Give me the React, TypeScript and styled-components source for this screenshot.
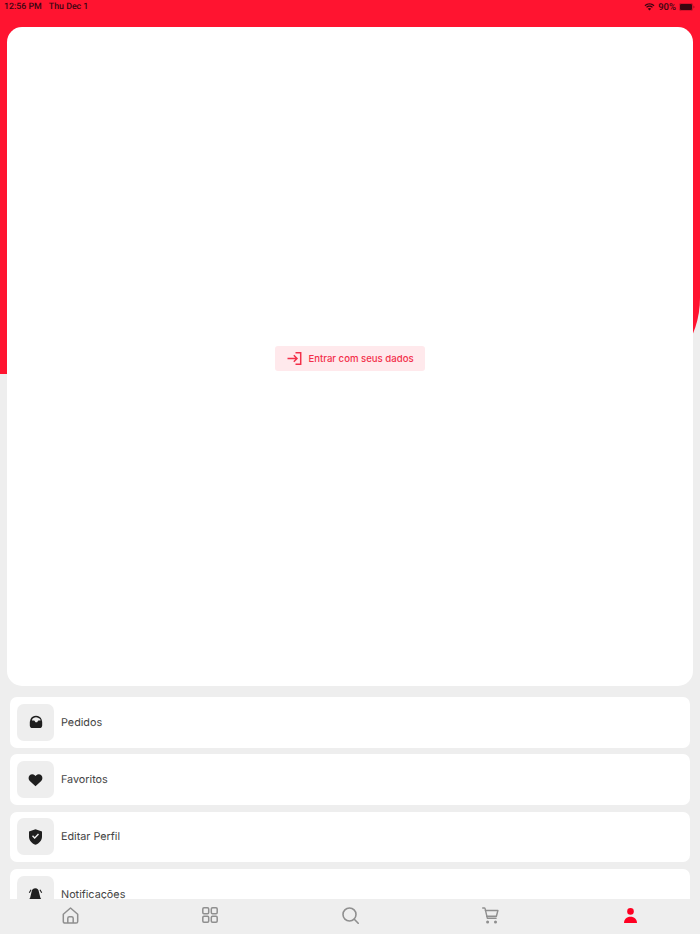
import React from 'react';
import styled, { createGlobalStyle } from 'styled-components';

const GlobalStyle = createGlobalStyle`
  html, body {
    margin: 0;
    padding: 0;
    height: 100%;
    background: #eeeeee;
    font-family: Inter, "Liberation Sans", sans-serif;
    text-rendering: geometricPrecision;
  }
`;

const Page = styled.div`
  position: relative;
  width: 700px;
  height: 934px;
  overflow: hidden;
  background: #eeeeee;
  display: flex;
  flex-direction: column;
`;

const RedBackdrop = styled.div`
  position: absolute;
  top: 0;
  left: 0;
  right: 0;
  height: 374px;
  background: #ff1430;
  border-bottom-right-radius: 60px 76px;
`;

const StatusBar = styled.div`
  position: relative;
  height: 27px;
  flex: none;
  box-sizing: border-box;
  padding: 1.5px 5px 0 4px;
  display: flex;
  justify-content: space-between;
  align-items: flex-start;
  font-family: Roboto, Inter, sans-serif;
  line-height: 11px;
  font-weight: 500;
  color: #3a0610;
`;

const StatusGroup = styled.div<{ $gap: number; $size: number }>`
  display: flex;
  align-items: center;
  gap: ${p => p.$gap}px;
  font-size: ${p => p.$size}px;
`;

const Body = styled.div`
  position: relative;
  flex: 1;
  min-height: 0;
  overflow: hidden;
  padding: 0 7px;
  display: flex;
  flex-direction: column;
`;

const LoginCard = styled.div`
  height: 659px;
  flex: none;
  box-sizing: border-box;
  padding-top: 4px;
  background: #ffffff;
  border-radius: 15px;
  display: flex;
  align-items: center;
  justify-content: center;
`;

const LoginButton = styled.button`
  width: 150px;
  height: 25px;
  padding: 0 0 0 1px;
  border: none;
  border-radius: 3px;
  background: #ffe9ec;
  color: #f3304a;
  display: flex;
  align-items: center;
  justify-content: center;
  gap: 6px;
  font-family: Inter, sans-serif;
  font-size: 9.6px;
  font-weight: 500;
`;

const MenuList = styled.div`
  flex: none;
  margin-top: 11px;
  padding: 0 3px;
  display: flex;
  flex-direction: column;
  gap: 6.67px;
`;

const MenuRow = styled.div`
  height: 50.67px;
  flex: none;
  box-sizing: border-box;
  padding: 0 7px;
  background: #ffffff;
  border-radius: 7px;
  display: flex;
  align-items: center;
  gap: 7px;
`;

const IconTile = styled.div`
  width: 37px;
  height: 37px;
  flex: none;
  border-radius: 7px;
  background: #eeeeee;
  color: #1f1f1f;
  display: flex;
  align-items: center;
  justify-content: center;
`;

const MenuLabel = styled.span`
  font-size: 10.8px;
  color: #444444;
`;

const TabBar = styled.nav`
  position: relative;
  height: 35px;
  flex: none;
  box-sizing: border-box;
  padding-bottom: 3px;
  background: #eeeeee;
  display: grid;
  grid-template-columns: repeat(5, 140px);
`;

const TabItem = styled.div<{ $active?: boolean }>`
  display: flex;
  align-items: center;
  justify-content: center;
  color: ${p => (p.$active ? '#ff0022' : '#8f8f8f')};
`;

const WifiIcon = () => (
  <svg width="11" height="8" viewBox="0 0 11 8" fill="currentColor">
    <path d="M5.5 1.6c1.6 0 3 .6 4.1 1.6l.9-.9C9.2 1 7.4.2 5.5.2S1.8 1 .5 2.3l.9.9c1.1-1 2.5-1.6 4.1-1.6z" />
    <path d="M5.5 3.8c1 0 1.8.4 2.5 1l.9-.9c-.9-.9-2.1-1.4-3.4-1.4s-2.5.5-3.4 1.4l.9.9c.7-.6 1.5-1 2.5-1z" />
    <path d="M5.5 5c-.7 0-1.2.3-1.7.7l1.7 1.9 1.7-1.9C6.7 5.3 6.2 5 5.5 5z" />
  </svg>
);

const BatteryIcon = () => (
  <svg width="16" height="8" viewBox="0 0 16 8">
    <rect x="0.3" y="0.3" width="13.4" height="7.4" rx="1.8" fill="none" stroke="currentColor" strokeOpacity="0.4" strokeWidth="0.6" />
    <rect x="1" y="1" width="12" height="6" rx="1.1" fill="currentColor" />
    <path d="M14.5 2.8c.6.2 1 .7 1 1.2s-.4 1-1 1.2z" fill="currentColor" fillOpacity="0.5" />
  </svg>
);

const LoginIcon = () => (
  <svg width="15" height="13" viewBox="0 0 15 13" fill="none" stroke="currentColor" strokeWidth="1.5">
    <path d="M8.5 .8h5.200v11.400H8.500" />
    <path d="M.5 6.500h9.500M6.800 3.300l3.200 3.200-3.200 3.200" />
  </svg>
);

const TrayIcon = () => (
  <svg width="14" height="14" viewBox="0 0 14 14" fill="currentColor">
    <path fillRule="evenodd" d="M7 .8c2.600 0 4.700 1.300 5.500 3.400l.6 2.300c.1.300.1.600.1.900v3c0 1.500-1.200 2.700-2.700 2.700H3.500C2 13.100.8 11.900.8 10.400v-3c0-.3 0-.6.1-.9l.6-2.300C2.300 2.100 4.400.8 7 .8zM7 2.300c-1.800 0-3.200.9-3.800 2.300l-.2 1h2c.4 0 .7.200.9.600l.2.500c.2.400.5.600.9.600h.6c.4 0 .7-.2.900-.6l.2-.500c.2-.4.500-.6.900-.6h2l-.2-1C10.200 3.200 8.800 2.300 7 2.300z" />
  </svg>
);

const HeartIcon = () => (
  <svg width="15" height="14" viewBox="0 0 15 14" fill="currentColor">
    <path d="M7.500 13.300 1.800 7.900C.3 6.400.2 4 1.500 2.500 2.900 1 5.200.9 6.700 2.200l.8.800.8-.800c1.500-1.300 3.800-1.200 5.200.3 1.300 1.500 1.200 3.900-.3 5.400z" />
  </svg>
);

const ShieldIcon = () => (
  <svg width="15" height="16" viewBox="0 0 15 16" fill="currentColor">
    <path fillRule="evenodd" d="M7.500.3 14 2.400v5c0 4-2.700 6.900-6.500 8.300C3.700 14.300 1 11.400 1 7.400v-5zM11 5.600l-1-1-3.300 3.400L5 6.300l-1 1 2.700 2.700z" />
  </svg>
);

const SirenIcon = () => (
  <svg width="15" height="15" viewBox="0 0 15 15" fill="currentColor">
    <path d="M7.500 1.300c1.900 0 3.100 1.500 3.400 3.400l1.400 5.800c.2.600.5 1 .9 1.500V14H1.300v-2c.4-.5.700-.9.900-1.500l1.400-5.800c.3-1.900 1.500-3.400 3.900-3.400z" />
    <path d="M2.600 2.500l.9.500-1.700 3-1-.5zM12.400 2.500l-.9.500 1.700 3 1-.5z" />
  </svg>
);

const HomeIcon = () => (
  <svg width="17" height="17" viewBox="0 0 17 17" fill="none" stroke="currentColor" strokeWidth="1.500" strokeLinejoin="round">
    <path d="M1.300 7.300 8.500 1l7.200 6.300v7.200c0 .9-.7 1.600-1.600 1.600H2.900c-.9 0-1.600-.7-1.600-1.600z" />
    <path d="M5.800 16v-4.700c0-.9.700-1.600 1.600-1.600h2.200c.9 0 1.600.7 1.600 1.600V16" />
  </svg>
);

const GridIcon = () => (
  <svg width="16" height="16" viewBox="0 0 16 16" fill="none" stroke="currentColor" strokeWidth="1.500">
    <rect x="0.800" y="0.800" width="5.900" height="5.900" rx="1.200" />
    <rect x="9.300" y="0.800" width="5.900" height="5.900" rx="1.200" />
    <rect x="0.800" y="9.300" width="5.900" height="5.900" rx="1.200" />
    <rect x="9.300" y="9.300" width="5.900" height="5.900" rx="1.200" />
  </svg>
);

const SearchIcon = () => (
  <svg width="17" height="17" viewBox="0 0 17 17" fill="none" stroke="currentColor" strokeWidth="1.600" strokeLinecap="round">
    <circle cx="7.500" cy="7.500" r="6.500" />
    <path d="m12.300 12.300 3.900 3.900" />
  </svg>
);

const CartIcon = () => (
  <svg width="17" height="17" viewBox="0 0 17 17" fill="none" stroke="currentColor" strokeWidth="1.400" strokeLinejoin="round" strokeLinecap="round">
    <path d="M.700 1h1.600c.4 0 .7.300.8.600L5.300 11.200h8.800" />
    <path d="M3.400 3.500h12.500l-1.500 5.700H4.700" />
    <circle cx="5.600" cy="15" r="0.800" fill="currentColor" />
    <circle cx="13.500" cy="15" r="0.800" fill="currentColor" />
  </svg>
);

const UserIcon = () => (
  <svg width="13" height="15" viewBox="0 0 13 15" fill="currentColor">
    <circle cx="6.500" cy="3.400" r="3.300" />
    <path d="M0 15c0-3.800 2.600-6.300 6.500-6.300S13 11.200 13 15z" />
  </svg>
);

const items = [
  { label: 'Pedidos', icon: <TrayIcon /> },
  { label: 'Favoritos', icon: <HeartIcon /> },
  { label: 'Editar Perfil', icon: <ShieldIcon /> },
  { label: 'Notificações', icon: <SirenIcon /> }
];

export default function App (): React.ReactElement {
  return (
    <Page>
      <GlobalStyle />
      <RedBackdrop />
      <StatusBar>
        <StatusGroup $gap={7} $size={8.8}>
          <span>12:56 PM</span>
          <span>Thu Dec 1</span>
        </StatusGroup>
        <StatusGroup $gap={3} $size={9.5}>
          <WifiIcon />
          <span>90%</span>
          <BatteryIcon />
        </StatusGroup>
      </StatusBar>
      <Body>
        <LoginCard>
          <LoginButton>
            <LoginIcon />
            Entrar com seus dados
          </LoginButton>
        </LoginCard>
        <MenuList>
          {items.map(item => (
            <MenuRow key={item.label}>
              <IconTile>{item.icon}</IconTile>
              <MenuLabel>{item.label}</MenuLabel>
            </MenuRow>
          ))}
        </MenuList>
      </Body>
      <TabBar>
        <TabItem><HomeIcon /></TabItem>
        <TabItem><GridIcon /></TabItem>
        <TabItem><SearchIcon /></TabItem>
        <TabItem><CartIcon /></TabItem>
        <TabItem $active><UserIcon /></TabItem>
      </TabBar>
    </Page>
  );
}
